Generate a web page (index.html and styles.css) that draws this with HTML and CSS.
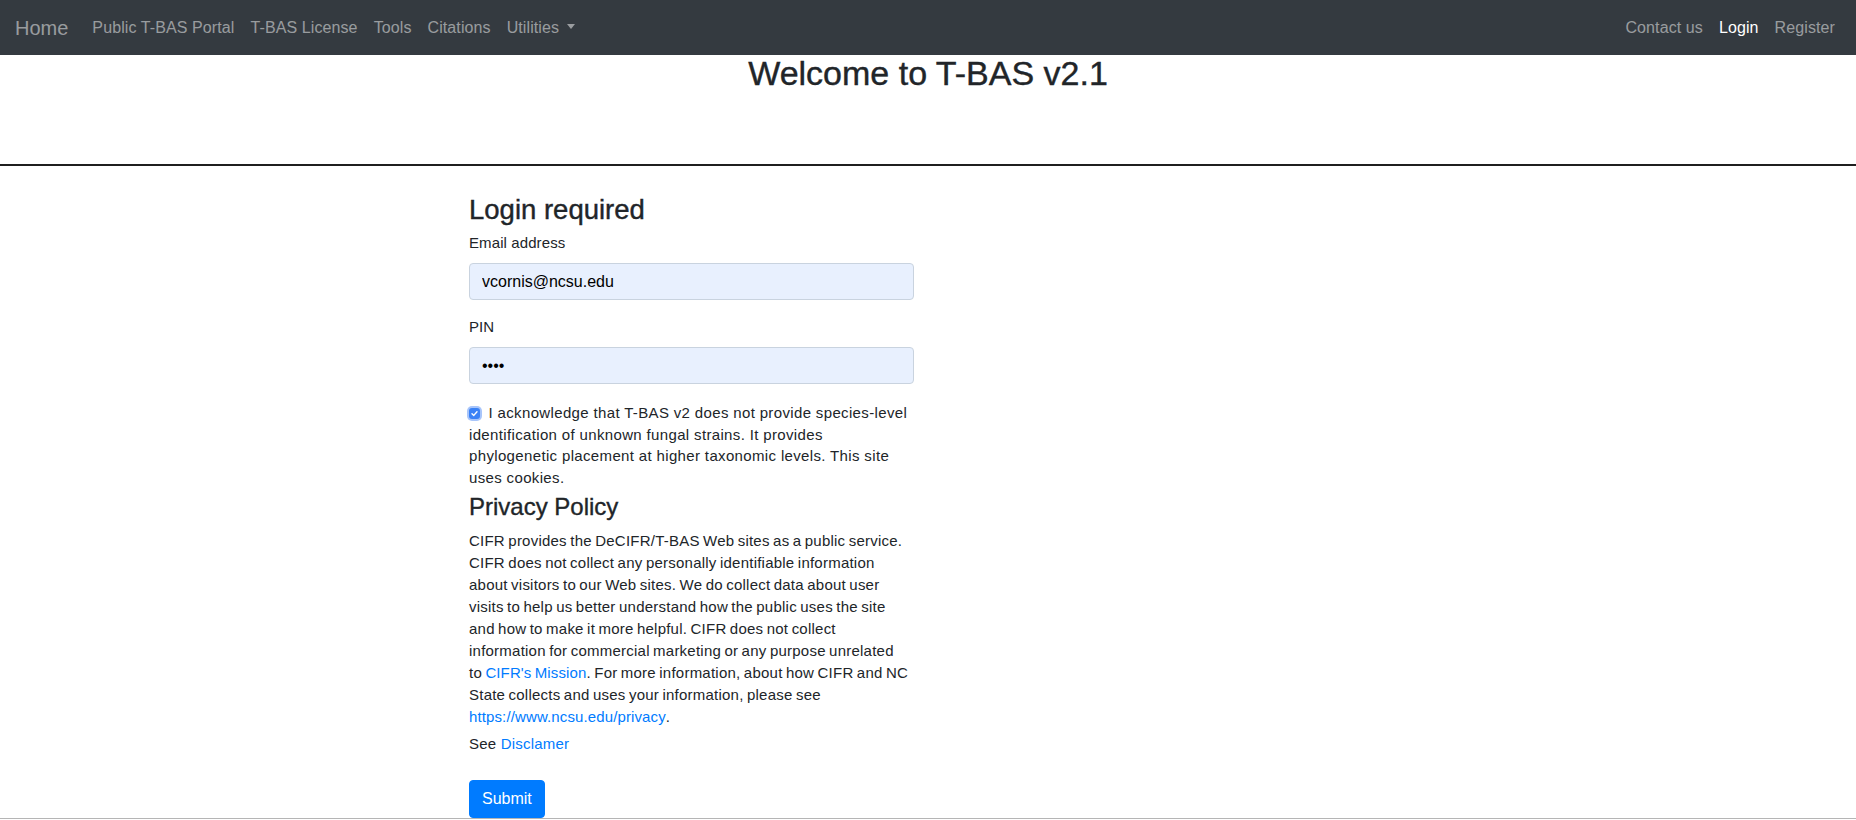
FILE: index.html
```html
<!DOCTYPE html>
<html lang="en">
<head>
<meta charset="utf-8">
<title>T-BAS v2.1 Login</title>
<link rel="stylesheet" href="styles.css">
</head>
<body>
<nav class="navbar">
  <a class="brand" href="#">Home</a>
  <ul class="nav nav-left">
    <li><a class="nav-link" href="#">Public T-BAS Portal</a></li>
    <li><a class="nav-link" href="#">T-BAS License</a></li>
    <li><a class="nav-link" href="#">Tools</a></li>
    <li><a class="nav-link" href="#">Citations</a></li>
    <li><a class="nav-link dropdown-toggle" href="#">Utilities</a></li>
  </ul>
  <ul class="nav nav-right">
    <li><a class="nav-link" href="#">Contact us</a></li>
    <li><a class="nav-link active" href="#">Login</a></li>
    <li><a class="nav-link" href="#">Register</a></li>
  </ul>
</nav>

<header class="welcome">
  <h1 class="welcome-title">Welcome to T-BAS v2.1</h1>
</header>
<div class="rule"></div>

<main class="login">
  <h3 class="login-title">Login required</h3>
  <form class="login-form">
    <div class="field">
      <label class="field-label" for="email">Email address</label>
      <input class="field-input" id="email" type="email" value="vcornis@ncsu.edu">
    </div>
    <div class="field">
      <label class="field-label" for="pin">PIN</label>
      <input class="field-input" id="pin" type="password" value="1234">
    </div>
    <p class="ack"><span class="check"><svg viewBox="0 0 11 11" width="11" height="11"><path d="M3 5.7 L4.8 7.4 L8 3.7" fill="none" stroke="#fff" stroke-width="1.4" stroke-linecap="round" stroke-linejoin="round"/></svg></span> I acknowledge that T-BAS v2 does not provide species-level identification of unknown fungal strains. It provides phylogenetic placement at higher taxonomic levels. This site uses cookies.</p>
    <h4 class="privacy-title">Privacy Policy</h4>
    <p class="privacy-text">CIFR provides the DeCIFR/T-BAS Web sites as a public service. CIFR does not collect any personally identifiable information about visitors to our Web sites. We do collect data about user visits to help us better understand how the public uses the site and how to make it more helpful. CIFR does not collect information for commercial marketing or any purpose unrelated to&nbsp;<a href="#">CIFR's Mission</a>. For more information, about how CIFR and NC State collects and uses your information, please see <a href="#">https://www.ncsu.edu/privacy</a>.</p>
    <p class="see">See <a href="#">Disclamer</a></p>
    <button class="btn-submit" type="button">Submit</button>
  </form>
</main>
<div class="footer-rule"></div>
</body>
</html>
```

FILE: styles.css
```css
* { box-sizing: border-box; }
html, body { margin: 0; padding: 0; }
body {
  font-family: "Liberation Sans", Arial, sans-serif;
  color: #212529;
  background: #fff;
  font-size: 15px;
  line-height: 22px;
}
a { color: #007bff; text-decoration: none; }

.navbar {
  height: 55px;
  background: #343a40;
  display: flex;
  align-items: center;
  padding: 0 13px 0 15px;
}
.brand {
  font-size: 20px;
  line-height: 30px;
  color: rgba(255,255,255,.5);
  margin-right: 16px;
}
.nav {
  list-style: none;
  margin: 0;
  padding: 0;
  display: flex;
}
.nav-right { margin-left: auto; }
.nav-link {
  display: block;
  font-size: 16px;
  line-height: 24px;
  padding: 8px;
  letter-spacing: 0.1px;
  color: rgba(255,255,255,.5);
}
.nav-link.active { color: #fff; }
.dropdown-toggle::after {
  content: "";
  display: inline-block;
  margin-left: 8px;
  vertical-align: 4px;
  border-top: 5px solid;
  border-left: 4.5px solid transparent;
  border-right: 4.5px solid transparent;
}

.welcome {
  height: 109px;
  padding-top: 1px;
  text-align: center;
}
.welcome-title {
  margin: 0;
  font-size: 34px;
  line-height: 34px;
  font-weight: 400;
  -webkit-text-stroke: 0.4px #212529;
  color: #212529;
}
.rule {
  height: 2px;
  background: #1f1f1f;
}

.login {
  width: 445px;
  margin-left: 469px;
}
.login-title {
  margin: 28px 0 7px;
  font-size: 27.5px;
  line-height: 31px;
  font-weight: 400;
  -webkit-text-stroke: 0.4px #212529;
}
.login-form { margin: 0; }
.field { margin-bottom: 16px; }
.field-label {
  display: block;
  margin-bottom: 9px;
  letter-spacing: 0.1px;
}
.field-input {
  display: block;
  width: 100%;
  height: 37px;
  padding: 6px 12px;
  font-family: "Liberation Sans", Arial, sans-serif;
  font-size: 16px;
  color: #000;
  background: #e8f0fe;
  border: 1px solid #c9d3df;
  border-radius: 4px;
  outline: none;
}
.ack {
  margin: 18px 0 0;
  padding-right: 2px;
  line-height: 21.5px;
  letter-spacing: 0.35px;
}
.check {
  display: inline-block;
  width: 11px;
  height: 11px;
  border-radius: 3px;
  background: #3b82f6;
  box-shadow: 0 0 0 2px rgba(96,150,245,.55);
  vertical-align: -1px;
  margin-right: 4px;
}
.check svg { display: block; }
.privacy-title {
  margin: 4px 0 0;
  font-size: 24px;
  line-height: 29px;
  font-weight: 400;
  -webkit-text-stroke: 0.35px #212529;
}
.privacy-text {
  margin: 9px 0 0;
  letter-spacing: 0.23px;
  word-spacing: -1px;
}
.privacy-text a { letter-spacing: 0.12px; }
.see { margin: 5px 0 0; letter-spacing: 0.2px; }
.btn-submit {
  display: block;
  margin-top: 25px;
  height: 38px;
  padding: 0 12px;
  font-family: "Liberation Sans", Arial, sans-serif;
  font-size: 16px;
  color: #fff;
  background: #007bff;
  border: 1px solid #007bff;
  border-radius: 4px;
}
.footer-rule {
  height: 1px;
  background: #b5b5b5;
}
```
